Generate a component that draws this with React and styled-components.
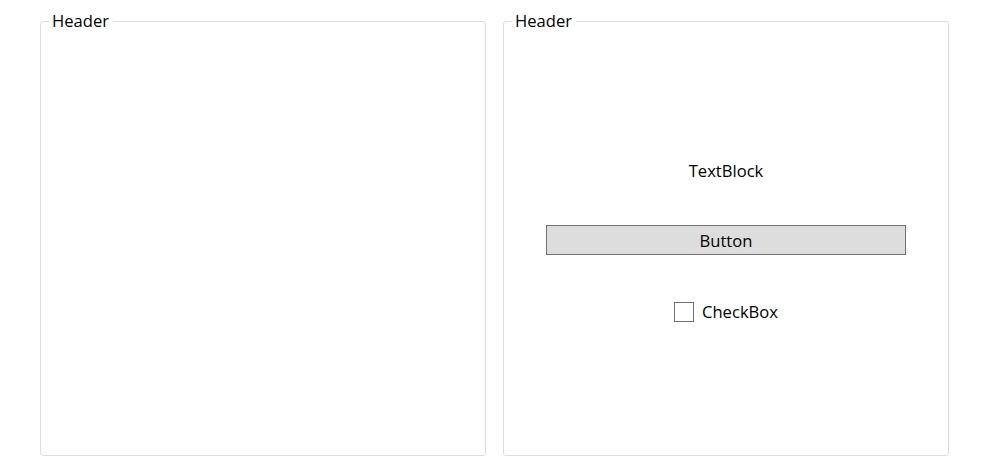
import styled, { createGlobalStyle } from "styled-components";

const Global = createGlobalStyle`
  body {
    margin: 0;
    background: #ffffff;
    font-family: "Open Sans", "Noto Sans", "Liberation Sans", sans-serif;
    color: #000;
  }
`

const Page = styled.div`
  display: flex;
  gap: 17px;
  padding: 10px 0 0 40px;
`

const GroupBox = styled.fieldset`
  box-sizing: border-box;
  width: 446px;
  height: 446px;
  margin: 0;
  padding: 0;
  border: 1px solid #d5dfe5;
  border-radius: 3px;
  min-width: 0;
`

const Header = styled.legend`
  margin-left: 8px;
  padding: 0 4px 0 3px;
  font-size: 16.6px;
  line-height: 22px;
`

const Stack = styled.div`
  display: flex;
  flex-direction: column;
  align-items: center;
  padding-top: 128px;
`

const TextBlock = styled.div`
  font-size: 16.6px;
  line-height: 22px;
`

const Button = styled.button`
  box-sizing: border-box;
  width: 360px;
  height: 30px;
  margin-top: 43px;
  background: #dddddd;
  border: 1px solid #707070;
  border-radius: 0;
  font-family: inherit;
  font-size: 16.6px;
  color: #000;
  padding: 0;
`

const CheckRow = styled.label`
  display: flex;
  align-items: center;
  gap: 8px;
  margin-top: 46px;
  font-size: 16.6px;
  line-height: 22px;
`

const Box = styled.span`
  box-sizing: border-box;
  width: 20px;
  height: 20px;
  border: 1.5px solid #707070;
  background: #fff;
`

export default function App() {
  return (
    <>
      <Global />
      <Page>
        <GroupBox>
          <Header>Header</Header>
        </GroupBox>
        <GroupBox>
          <Header>Header</Header>
          <Stack>
            <TextBlock>TextBlock</TextBlock>
            <Button>Button</Button>
            <CheckRow>
              <Box />
              CheckBox
            </CheckRow>
          </Stack>
        </GroupBox>
      </Page>
    </>
  )
}
